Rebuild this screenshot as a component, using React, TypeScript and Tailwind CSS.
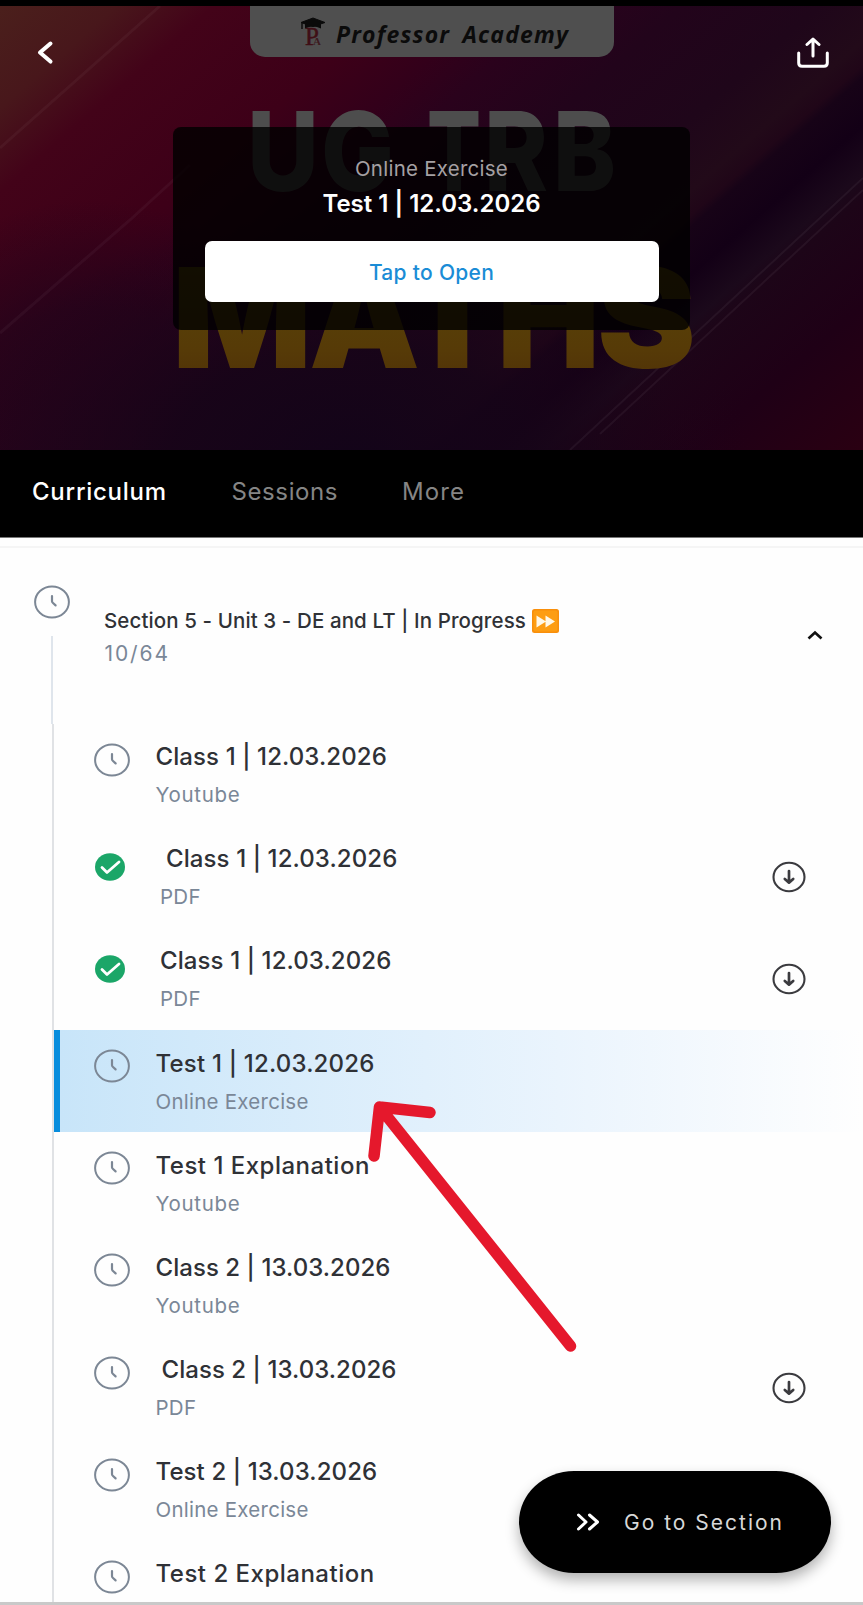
import type { ReactNode } from "react";

type Lesson = {
  title: string;
  kind?: string;
  done?: boolean;
  active?: boolean;
  download?: boolean;
  indent?: string;
  tracking: string;
};

const lessons: Lesson[] = [
  { title: "Class 1 | 12.03.2026", kind: "Youtube", tracking: "tracking-[0.1px]" },
  { title: "Class 1 | 12.03.2026", kind: "PDF", done: true, download: true, indent: "pl-[6px]", tracking: "tracking-[0.1px]" },
  { title: "Class 1 | 12.03.2026", kind: "PDF", done: true, download: true, tracking: "tracking-[0.1px]" },
  { title: "Test 1 | 12.03.2026", kind: "Online Exercise", active: true, tracking: "tracking-[0.2px]" },
  { title: "Test 1 Explanation", kind: "Youtube", tracking: "tracking-[0.5px]" },
  { title: "Class 2 | 13.03.2026", kind: "Youtube", tracking: "tracking-[0.05px]" },
  { title: "Class 2 | 13.03.2026", kind: "PDF", download: true, indent: "pl-[6px]", tracking: "tracking-[0.05px]" },
  { title: "Test 2 | 13.03.2026", kind: "Online Exercise", tracking: "tracking-[0.1px]" },
  { title: "Test 2 Explanation", tracking: "tracking-[0.5px]" },
];

function ClockIcon() {
  return (
    <svg className="w-[36px] h-[34px] shrink-0" viewBox="0 0 36 34" fill="none" stroke="#7c8795">
      <ellipse cx="18" cy="17" rx="16.9" ry="15.6" strokeWidth="2" />
      <path d="M18 11v5.2q0 .9 1 1.8l2.6 2.4" strokeWidth="2.2" strokeLinecap="round" />
    </svg>
  );
}

function CheckIcon() {
  return (
    <svg className="w-[30px] h-[28px] shrink-0" viewBox="0 0 30 28" fill="none">
      <ellipse cx="15" cy="14" rx="15" ry="13.8" fill="#1ba668" />
      <path d="M7 14.5l5 5L24 9" stroke="#fff" strokeWidth="2.8" strokeLinecap="round" strokeLinejoin="round" />
    </svg>
  );
}

function DownloadIcon() {
  return (
    <svg className="w-[34px] h-[32px] shrink-0" viewBox="0 0 34 32" fill="none" stroke="#3b3b3f" strokeLinecap="round" strokeLinejoin="round">
      <ellipse cx="17" cy="16" rx="15.5" ry="14.2" strokeWidth="2.1" />
      <path d="M17 10v11M12.8 18l4.2 3.6 4.2-3.6" strokeWidth="2.7" />
    </svg>
  );
}

function Letter({ x, w, y, size, weight, fill, children }: {
  x: number; w: number; y: number; size: number; weight: number; fill: string; children: ReactNode;
}) {
  return (
    <text x={x} y={y} fontSize={size} fontWeight={weight} fill={fill} textLength={w} lengthAdjust="spacingAndGlyphs" fontFamily="Inter, sans-serif">
      {children}
    </text>
  );
}

function BannerArt() {
  return (
    <svg className="absolute inset-0" width="863" height="444" viewBox="0 6 863 444">
      <defs>
        <linearGradient id="bg" gradientUnits="userSpaceOnUse" x1="0" y1="0" x2="594" y2="683">
          <stop offset="0" stopColor="#4b201c" />
          <stop offset=".09" stopColor="#48171b" />
          <stop offset=".16" stopColor="#430319" />
          <stop offset=".29" stopColor="#3d0018" />
          <stop offset=".36" stopColor="#33001a" />
          <stop offset=".41" stopColor="#2a021c" />
          <stop offset=".5" stopColor="#22041b" />
          <stop offset=".6" stopColor="#1f061a" />
          <stop offset=".66" stopColor="#220a19" />
          <stop offset=".68" stopColor="#200618" />
          <stop offset=".69" stopColor="#170317" />
          <stop offset=".73" stopColor="#130016" />
          <stop offset=".77" stopColor="#1b091b" />
          <stop offset=".79" stopColor="#1d0518" />
          <stop offset=".88" stopColor="#1f0016" />
          <stop offset="1" stopColor="#2a0012" />
        </linearGradient>
        <radialGradient id="dusk" gradientUnits="userSpaceOnUse" cx="350" cy="460" r="400" gradientTransform="matrix(1 0 0 .62 0 175)">
          <stop offset="0" stopColor="#130419" />
          <stop offset=".45" stopColor="#160418" stopOpacity=".85" />
          <stop offset="1" stopColor="#200318" stopOpacity="0" />
        </radialGradient>
        {/* purple taking over the lower left corner */}
        <radialGradient id="corner" gradientUnits="userSpaceOnUse" cx="90" cy="440" r="240">
          <stop offset="0" stopColor="#22041b" stopOpacity=".9" />
          <stop offset=".55" stopColor="#22041b" stopOpacity=".75" />
          <stop offset="1" stopColor="#22041b" stopOpacity="0" />
        </radialGradient>
        <linearGradient id="gold" x1="0" y1="0" x2="0" y2="1">
          <stop offset="0" stopColor="#5b4a08" />
          <stop offset=".7" stopColor="#563a07" />
          <stop offset="1" stopColor="#4d2d08" />
        </linearGradient>
      </defs>
      <rect y="6" width="863" height="444" fill="url(#bg)" />
      <rect y="6" width="863" height="444" fill="url(#corner)" />
      <rect y="6" width="863" height="444" fill="url(#dusk)" />
      <path d="M0 148L160 6M0 333L130 220L190 165" stroke="#fff" strokeOpacity=".04" strokeWidth="3" fill="none" />
      <path d="M863 178L570 450M863 190L600 434" stroke="#fff" strokeOpacity=".05" strokeWidth="2" />

      <path d="M250 6h364v36a15 15 0 0 1-15 15H265a15 15 0 0 1-15-15z" fill="#4f4f4f" />
      {/* academy crest */}
      <path d="M301 22.500l12-4.500 12 4.500-12 4z" fill="#0a0a0a" stroke="#0a0a0a" strokeLinejoin="round" />
      <path d="M305 24v4.500q8-4 16 0V24" fill="#0a0a0a" />
      <path d="M302 23v6" stroke="#0a0a0a" strokeWidth="1.4" />
      <text x="305" y="44.500" fontSize="25" fontWeight="400" fill="#3f0f16" stroke="#3f0f16" strokeWidth=".5" fontFamily="Liberation Serif, serif">P</text>
      <text x="313" y="45" fontSize="11" fontWeight="700" fill="#3d1a1f" fontFamily="Liberation Serif, serif">A</text>
      <text x="336" y="43" fontSize="23" fontWeight="700" fontStyle="italic" fill="#0b0b0b" textLength="232" lengthAdjust="spacing" wordSpacing="5" fontFamily="Open Sans, sans-serif">
        Professor Academy
      </text>

      <Letter x={247} w={72} y={190.5} size={110} weight={800} fill="#4d4d4d">U</Letter>
      <Letter x={321} w={73} y={190.5} size={110} weight={800} fill="#4d4d4d">G</Letter>
      <Letter x={427} w={54} y={190.5} size={110} weight={800} fill="#4d4d4d">T</Letter>
      <Letter x={484} w={64} y={190.5} size={110} weight={800} fill="#4d4d4d">R</Letter>
      <Letter x={553} w={63} y={190.5} size={110} weight={800} fill="#4d4d4d">B</Letter>

      <Letter x={172} w={140} y={367.5} size={139} weight={900} fill="url(#gold)">M</Letter>
      <Letter x={309} w={111} y={367.5} size={139} weight={900} fill="url(#gold)">A</Letter>
      <Letter x={401} w={103} y={367.5} size={139} weight={900} fill="url(#gold)">T</Letter>
      <Letter x={497} w={103} y={367.5} size={139} weight={900} fill="url(#gold)">H</Letter>
      <Letter x={597} w={99} y={367.5} size={139} weight={900} fill="url(#gold)">S</Letter>
    </svg>
  );
}

function LessonRow({ lesson }: { lesson: Lesson }) {
  return (
    <div
      className={
        lesson.active
          ? "flex h-[102.1px] border-l-[6px] border-[#078ddd] bg-linear-to-r from-[#c8e5f9] via-[#eaf4fd] via-62% to-[#fefefe] to-100% pl-[34px]"
          : "flex h-[102.1px] pl-[40px]"
      }
    >
      <div className={lesson.done ? "w-[66px] shrink-0 pt-[27px] pl-[1px]" : "w-[61.5px] shrink-0 pt-[19px]"}>
        {lesson.done ? <CheckIcon /> : <ClockIcon />}
      </div>
      <div className="flex-1 whitespace-nowrap pt-[17.3px]">
        <p className={`text-[24px] leading-[32px] font-medium text-[#2f3136] ${lesson.tracking} ${lesson.indent ?? ""}`}>
          {lesson.title}
        </p>
        {lesson.kind && (
          <p
            className={
              lesson.kind === "Youtube"
                ? "mt-[8px] text-[20.5px] leading-[28px] tracking-[0.7px] text-[#7a8797]"
                : "mt-[8px] text-[20.5px] leading-[28px] tracking-[0.25px] text-[#7a8797]"
            }
          >
            {lesson.kind}
          </p>
        )}
      </div>
      {lesson.download && (
        <div className="pt-[35px] pr-[56.8px]">
          <DownloadIcon />
        </div>
      )}
    </div>
  );
}

export default function App() {
  return (
    <div className="relative h-[1605px] w-[863px] overflow-hidden bg-[#fefefe] font-['Inter',sans-serif]">
      <div className="h-[6px] bg-black" />

      {/* course banner */}
      <header className="relative h-[444px] overflow-hidden">
        <BannerArt />
        <div className="relative flex justify-between pt-[31px] pr-[33px] pl-[36px]">
          <svg className="mt-[3px] h-[26px] w-[18px]" viewBox="0 0 18 26" fill="none">
            <path d="M14.500 3.500L4 12.600l10.500 9" stroke="#fff" strokeWidth="4" strokeLinecap="round" strokeLinejoin="round" />
          </svg>
          <svg className="h-[32px] w-[34px]" viewBox="0 0 34 32" fill="none" stroke="#fff" strokeWidth="3" strokeLinecap="round" strokeLinejoin="round">
            <path d="M17 19V3M11 7.500L17 2l6 5.500M2.700 16v10q0 3.300 3.300 3.300h22q3.300 0 3.300-3.300V16" />
          </svg>
        </div>
        <div className="relative mx-auto mt-[57.5px] flex h-[203.5px] w-[517px] flex-col items-center rounded-[8px] bg-black/80 px-[31px] pt-[28px]">
          <p className="text-[20.5px] leading-[28px] font-normal tracking-[0.25px] text-[#a5a0a3]">Online Exercise</p>
          <p className="mt-[5px] text-[24px] leading-[32px] font-semibold text-white">Test 1 | 12.03.2026</p>
          <button className="mt-[21.5px] h-[60.5px] w-[454px] shrink-0 rounded-[7px] bg-white pt-[2px] text-[21px] font-medium tracking-[0.3px] text-[#1a8cd6]">
            Tap to Open
          </button>
        </div>
      </header>

      {/* tabs */}
      <nav className="flex h-[88px] border-b border-[#777] bg-black pt-[26px] pl-[32px] text-[24px] leading-[32px] text-[#858585]">
        <span className="w-[199.500px] font-medium tracking-[0.75px] text-white">Curriculum</span>
        <span className="w-[170.500px] tracking-[0.6px]">Sessions</span>
        <span className="tracking-[1.1px]">More</span>
      </nav>
      <div className="h-[10px] border-b-2 border-[#f5f5f5]" />

      {/* section heading */}
      <div className="flex h-[176px] pl-[34px]">
        <div className="flex w-[36px] flex-col items-center pt-[37px]">
          <ClockIcon />
          <div className="mt-[17px] w-[2px] flex-1 bg-[#dfe5ec]" />
        </div>
        <div className="ml-[34px] flex-1 pt-[59px]">
          <div className="flex items-center whitespace-nowrap">
            <p className="text-[20.5px] leading-[28px] font-medium tracking-[0.1px] text-[#303236]">
              Section 5 - Unit 3 - DE and LT | In Progress
            </p>
            <svg className="ml-[6px] h-[24px] w-[27px]" viewBox="0 0 27 24">
              <rect width="27" height="24" rx="2.500" fill="#f98f0b" />
              <rect x="1.500" y="1.500" width="24" height="21" rx="2" fill="#fd9d12" />
              <path d="M4.500 6.500l9.500 6-9.500 6zM13.500 6.500l9.500 6-9.500 6z" fill="#fff8e8" />
            </svg>
          </div>
          <p className="mt-[5px] pl-[0.5px] text-[21px] leading-[28px] font-normal tracking-[1.9px] text-[#7a8797]">10/64</p>
        </div>
        <svg className="mt-[81px] mr-[39px] h-[12px] w-[18px]" viewBox="0 0 18 12" fill="none">
          <path d="M2.500 9.500L9 3.500l6.500 6" stroke="#111" strokeWidth="2.700" />
        </svg>
      </div>

      {/* lessons */}
      <div className="ml-[52px] border-l-2 border-[#e0e2e5]">
        {lessons.map((lesson, i) => (
          <LessonRow key={i} lesson={lesson} />
        ))}
      </div>

      {/* pointer over the active lesson */}
      <svg className="absolute top-[1090px] left-[360px]" width="230" height="275" viewBox="360 1090 230 275" fill="none">
        <path d="M430 1112.500L379.500 1107L374 1156M379.500 1107L570.500 1346" stroke="#e5182c" strokeWidth="11.500" strokeLinecap="round" strokeLinejoin="round" />
      </svg>

      <button className="absolute top-[1471px] left-[519px] flex h-[102px] w-[312px] items-center rounded-[55px/51px] bg-black pl-[56px] text-[21px] text-[#d8d8d8] shadow-[0_7px_14px_rgba(0,0,0,0.3)]">
        <svg className="h-[20px] w-[26px]" viewBox="0 0 26 20" fill="none" stroke="#fff" strokeWidth="3" strokeLinecap="round" strokeLinejoin="round">
          <path d="M3.500 3l7.500 7-7.500 7M14.500 3l8 7-8 7" />
        </svg>
        <span className="ml-[23px] pt-[1px] tracking-[2px]">Go to Section</span>
      </button>
      <div className="absolute inset-x-0 bottom-0 h-[3px] bg-[#c9c9c9]" />
    </div>
  );
}
